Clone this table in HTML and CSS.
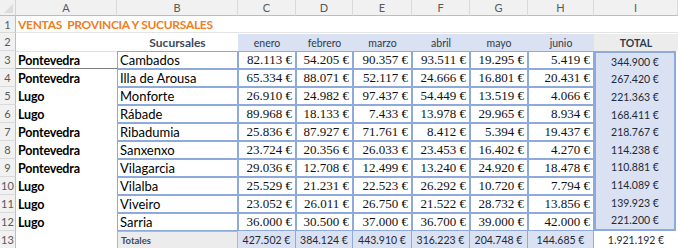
FILE: index.html
```html
<!DOCTYPE html>
<html lang="es">
<head>
<meta charset="utf-8">
<title>Ventas provincia y sucursales</title>
<link rel="stylesheet" href="styles.css">
</head>
<body>
<div class="sheet">
  <div class="corner"><span class="tri"></span></div>
  <div class="colh">A</div><div class="colh">B</div><div class="colh">C</div><div class="colh">D</div><div class="colh">E</div><div class="colh">F</div><div class="colh">G</div><div class="colh">H</div><div class="colh">I</div>

  <div class="rowh">1</div>
  <div class="title">VENTAS&nbsp; PROVINCIA Y SUCURSALES</div>
  <div class="cell r1"></div><div class="cell r1"></div><div class="cell r1"></div><div class="cell r1"></div><div class="cell r1"></div><div class="cell r1"></div><div class="cell r1"></div>

  <div class="rowh">2</div>
  <div class="cell"></div>
  <div class="cell suc">Sucursales</div>
  <div class="cell mon">enero</div><div class="cell mon">febrero</div><div class="cell mon">marzo</div><div class="cell mon">abril</div><div class="cell mon">mayo</div><div class="cell mon">junio</div>
  <div class="cell toth">TOTAL</div>

  <div class="totcol">
    <div>344.900 €</div><div>267.420 €</div><div>221.363 €</div><div>168.411 €</div><div>218.767 €</div><div>114.238 €</div><div>110.881 €</div><div>114.089 €</div><div>139.923 €</div><div>221.200 €</div>
  </div>

  <div class="rowh">3</div><div class="cell prov first">Pontevedra</div><div class="cell br">Cambados</div>
  <div class="cell num">82.113 €</div><div class="cell num">54.205 €</div><div class="cell num">90.357 €</div><div class="cell num">93.511 €</div><div class="cell num">19.295 €</div><div class="cell num">5.419 €</div>

  <div class="rowh">4</div><div class="cell prov">Pontevedra</div><div class="cell br">Illa de Arousa</div>
  <div class="cell num">65.334 €</div><div class="cell num">88.071 €</div><div class="cell num">52.117 €</div><div class="cell num">24.666 €</div><div class="cell num">16.801 €</div><div class="cell num">20.431 €</div>

  <div class="rowh">5</div><div class="cell prov">Lugo</div><div class="cell br">Monforte</div>
  <div class="cell num">26.910 €</div><div class="cell num">24.982 €</div><div class="cell num">97.437 €</div><div class="cell num">54.449 €</div><div class="cell num">13.519 €</div><div class="cell num">4.066 €</div>

  <div class="rowh">6</div><div class="cell prov">Lugo</div><div class="cell br">Rábade</div>
  <div class="cell num">89.968 €</div><div class="cell num">18.133 €</div><div class="cell num">7.433 €</div><div class="cell num">13.978 €</div><div class="cell num">29.965 €</div><div class="cell num">8.934 €</div>

  <div class="rowh">7</div><div class="cell prov">Pontevedra</div><div class="cell br">Ribadumia</div>
  <div class="cell num">25.836 €</div><div class="cell num">87.927 €</div><div class="cell num">71.761 €</div><div class="cell num">8.412 €</div><div class="cell num">5.394 €</div><div class="cell num">19.437 €</div>

  <div class="rowh">8</div><div class="cell prov">Pontevedra</div><div class="cell br">Sanxenxo</div>
  <div class="cell num">23.724 €</div><div class="cell num">20.356 €</div><div class="cell num">26.033 €</div><div class="cell num">23.453 €</div><div class="cell num">16.402 €</div><div class="cell num">4.270 €</div>

  <div class="rowh">9</div><div class="cell prov">Pontevedra</div><div class="cell br">Vilagarcia</div>
  <div class="cell num">29.036 €</div><div class="cell num">12.708 €</div><div class="cell num">12.499 €</div><div class="cell num">13.240 €</div><div class="cell num">24.920 €</div><div class="cell num">18.478 €</div>

  <div class="rowh">10</div><div class="cell prov">Lugo</div><div class="cell br">Vilalba</div>
  <div class="cell num">25.529 €</div><div class="cell num">21.231 €</div><div class="cell num">22.523 €</div><div class="cell num">26.292 €</div><div class="cell num">10.720 €</div><div class="cell num">7.794 €</div>

  <div class="rowh">11</div><div class="cell prov">Lugo</div><div class="cell br">Viveiro</div>
  <div class="cell num">23.052 €</div><div class="cell num">26.011 €</div><div class="cell num">26.750 €</div><div class="cell num">21.522 €</div><div class="cell num">28.732 €</div><div class="cell num">13.856 €</div>

  <div class="rowh">12</div><div class="cell prov">Lugo</div><div class="cell br">Sarria</div>
  <div class="cell num">36.000 €</div><div class="cell num">30.500 €</div><div class="cell num">37.000 €</div><div class="cell num">36.700 €</div><div class="cell num">39.000 €</div><div class="cell num">42.000 €</div>

  <div class="rowh">13</div><div class="cell"></div><div class="cell totl">Totales</div>
  <div class="cell tot">427.502 €</div><div class="cell tot">384.124 €</div><div class="cell tot">443.910 €</div><div class="cell tot">316.223 €</div><div class="cell tot">204.748 €</div><div class="cell tot">144.685 €</div>
  <div class="cell grand">1.921.192 €</div>
</div>
</body>
</html>
```
FILE: styles.css
```css
html, body {
  margin: 0;
  padding: 0;
  background: #ffffff;
}

.sheet {
  display: grid;
  grid-template-columns: 16px 101px 121px 58px 57px 59px 58px 58px 66px 84px;
  grid-template-rows: 16px 17px 18px repeat(11, 18px);
  width: 678px;
  font-family: Lato, "Liberation Sans", sans-serif;
  color: #000;
  overflow: hidden;
}

.corner {
  background: #f1f1f1;
  border-right: 1px solid #d4d4d4;
  border-bottom: 1px solid #bdbdbd;
  position: relative;
}

.tri {
  position: absolute;
  right: 2px;
  bottom: 2px;
  width: 0;
  height: 0;
  border-left: 9px solid transparent;
  border-bottom: 9px solid #dcdcdc;
}

.colh {
  background: #f1f1f1;
  border-right: 1px solid #dadada;
  border-bottom: 1px solid #bdbdbd;
  color: #595959;
  font-size: 11px;
  display: flex;
  align-items: center;
  justify-content: center;
}

.rowh {
  background: #f1f1f1;
  border-right: 1px solid #bdbdbd;
  border-bottom: 1px solid #dadada;
  color: #595959;
  font-size: 11px;
  display: flex;
  align-items: center;
  justify-content: center;
}

.cell {
  display: flex;
  align-items: center;
  white-space: nowrap;
  min-width: 0;
  box-sizing: border-box;
}

.title {
  grid-column: 2 / span 2;
  color: #f07d1f;
  font-weight: 700;
  font-size: 12px;
  letter-spacing: -0.3px;
  display: flex;
  align-items: center;
  padding-left: 2px;
  white-space: nowrap;
  border-bottom: 1px solid #e4e4e4;
}

.r1 {
  border-bottom: 1px solid #e4e4e4;
}

.suc {
  justify-content: center;
  font-weight: 700;
  font-size: 12px;
  color: #3c4a5c;
}

.mon {
  background: #d9e1f2;
  justify-content: center;
  font-size: 10.5px;
  color: #2f3b4c;
  margin-top: 1px;
}

.toth {
  background: #ececec;
  justify-content: center;
  font-weight: 700;
  font-size: 10.5px;
  color: #2f3b4c;
  margin-top: 1px;
}

.prov {
  font-weight: 700;
  font-size: 12.5px;
  letter-spacing: -0.2px;
  padding-left: 2px;
}

.prov.first {
  border-top: 1px solid #e0e0e0;
  border-bottom: 1px solid #7f7f7f;
}

.br {
  border: 1px solid #8eaadb;
  font-size: 13px;
  padding-left: 2px;
}

.num {
  border: 1px solid #8eaadb;
  justify-content: flex-end;
  padding-right: 3px;
  font-family: "Liberation Serif", serif;
  font-variant-numeric: oldstyle-nums;
  font-size: 13px;
  color: #111;
}

.totcol {
  grid-column: 10;
  grid-row: 4 / span 10;
  background: #d9e1f2;
  border: 2px solid #8eaadb;
  display: flex;
  flex-direction: column;
  box-sizing: border-box;
  margin-right: 2px;
}

.totcol div {
  flex: 1;
  display: flex;
  align-items: center;
  justify-content: center;
  font-size: 10.5px;
  color: #1f2a38;
}

.totl {
  background: #ececec;
  border: 1px solid #a9b8d3;
  font-weight: 700;
  font-size: 9.5px;
  color: #3c4a5c;
  padding-left: 3px;
}

.tot {
  background: #d9e1f2;
  border-right: 1px solid #8eaadb;
  justify-content: center;
  font-size: 10.5px;
  color: #1f2a38;
}

.grand {
  justify-content: center;
  font-size: 10.5px;
  color: #1f2a38;
}
```
